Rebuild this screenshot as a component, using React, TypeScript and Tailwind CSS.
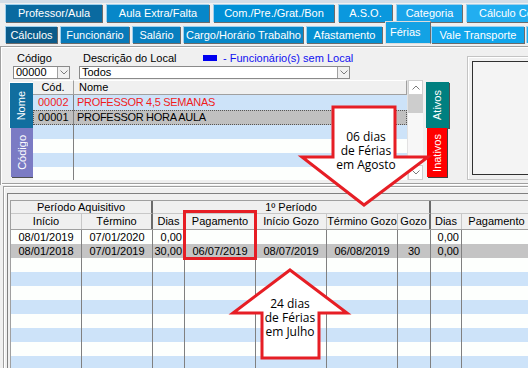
import React from "react";

const row1 = [
  { label: "Professor/Aula", cls: "w-[97px] bg-[#0a6aa0] justify-center" },
  { label: "Aula Extra/Falta", cls: "w-[103px] bg-[#0787c9] justify-center" },
  { label: "Com./Pre./Grat./Bon", cls: "w-[121px] bg-[#0090d6] justify-center" },
  { label: "A.S.O.", cls: "w-[54px] bg-[#0a98de] justify-center" },
  { label: "Categoria", cls: "w-[66px] bg-[#1aa4ea] justify-center" },
  { label: "Cálculo Comissão", cls: "w-[90px] bg-[#22aef0] justify-start pl-[12px]" },
];

const row2 = [
  { label: "Cálculos", cls: "w-[52px] mr-[3px] bg-[#0b5b8a]" },
  { label: "Funcionário", cls: "w-[69px] mr-[3px] bg-[#0879b8]" },
  { label: "Salário", cls: "w-[48px] mr-[3px] bg-[#087fbf]" },
  { label: "Cargo/Horário Trabalho", cls: "w-[120px] mr-[3px] bg-[#0888c8]" },
  { label: "Afastamento", cls: "w-[76px] mr-[3px] bg-[#0490d2]" },
];

const COLS = ["w-[71px]", "w-[71px]", "w-[32px]", "w-[71px]", "w-[71px]", "w-[71px]", "w-[33px]", "w-[31px]", "w-[70px]"];
const HEAD = ["Início", "Término", "Dias", "Pagamento", "Início Gozo", "Término Gozo", "Gozo", "Dias", "Pagamento"];
const ALIGN = [
  "justify-center",
  "justify-center",
  "justify-end pr-[2px]",
  "justify-center",
  "justify-center",
  "justify-center",
  "justify-center",
  "justify-end pr-[2px]",
  "justify-center",
];

const periods = [
  ["08/01/2019", "07/01/2020", "0,00", "", "", "", "", "0,00", ""],
  ["08/01/2018", "07/01/2019", "30,00", "06/07/2019", "08/07/2019", "06/08/2019", "30", "0,00", ""],
  ...Array.from({ length: 8 }, () => ["", "", "", "", "", "", "", "", ""]),
];

const people = [
  { cod: "00002", nome: "PROFESSOR 4,5 SEMANAS", red: true },
  { cod: "00001", nome: "PROFESSOR HORA AULA", red: false },
  { cod: "", nome: "", red: false },
  { cod: "", nome: "", red: false },
  { cod: "", nome: "", red: false },
  { cod: "", nome: "", red: false },
];

function Chevron({ up }: { up?: boolean }) {
  return (
    <svg width="8" height="5" viewBox="0 0 8 5">
      <polyline
        points={up ? "0.5,4.5 4,1 7.5,4.5" : "0.5,0.5 4,4 7.5,0.5"}
        fill="none"
        stroke="#7a7a7a"
        strokeWidth="1"
      />
    </svg>
  );
}

function Combo({ className, value }: { className: string; value: string }) {
  return (
    <div className={`h-[13px] flex bg-white border border-[#8a8a8a] ${className}`}>
      <span className="flex-1 pl-[2px] leading-[11px]">{value}</span>
      <span className="w-[12px] flex items-center justify-center bg-[#f0f0f0] border-l border-[#a0a0a0]">
        <Chevron />
      </span>
    </div>
  );
}

export default function App() {
  return (
    <div className="relative w-[528px] h-[368px] overflow-hidden bg-[#f0f0f0] font-['Liberation_Sans',Arial,sans-serif] text-[11px] leading-[13px] text-black">
      <div className="h-[3px] bg-[#d3dde7]" />

      {/* tab rows */}
      <div className="flex gap-[4px] pl-[5px] pt-[1px]">
        {row1.map((t) => (
          <div
            key={t.label}
            className={`h-[18px] shrink-0 flex items-center whitespace-nowrap text-white border-t border-l border-[#9fd0ee] shadow-[1px_1px_0_#6b6b6b] ${t.cls}`}
          >
            {t.label}
          </div>
        ))}
      </div>
      <div className="flex items-start pl-[5px] mt-[4px]">
        {row2.map((t) => (
          <div
            key={t.label}
            className={`h-[17px] shrink-0 flex items-center justify-center whitespace-nowrap text-white border-t border-l border-[#9fd0ee] shadow-[1px_1px_0_#6b6b6b] ${t.cls}`}
          >
            {t.label}
          </div>
        ))}
        <div className="relative z-10 -mt-[5px] h-[23px] w-[46px] shrink-0 flex items-start pl-[4px] pt-[4px] text-white bg-[#13a2e4] border border-[#dcdcdc] border-r-[#6b6b6b]">
          Férias
        </div>
        <div className="h-[17px] w-[93px] mr-[2px] shrink-0 flex items-center justify-center whitespace-nowrap text-white bg-[#10a6ec] border-t border-l border-[#9fd0ee] shadow-[1px_1px_0_#6b6b6b]">
          Vale Transporte
        </div>
        <div className="h-[17px] w-[20px] shrink-0 bg-[#20b0f0] border-t border-l border-[#9fd0ee]" />
      </div>

      {/* upper panel */}
      <div className="mt-[2px] h-[139px] flex shadow-[inset_1px_1px_0_#a0a0a0,inset_2px_2px_0_#ffffff,inset_0_-1px_0_#ffffff,inset_0_-2px_0_#a0a0a0]">
        <div className="w-[466px] shrink-0 flex flex-col">
          <div className="mt-[5px] h-[14px] flex items-center whitespace-nowrap">
            <span className="ml-[17px] w-[66px]">Código</span>
            <span className="w-[120px]">Descrição do Local</span>
            <span className="w-[14px] h-[6px] bg-[#0000f0]" />
            <span className="ml-[6px] text-[#1010f0]">- Funcionário(s) sem Local</span>
          </div>
          <div className="mt-[1px] flex">
            <Combo className="ml-[13px] w-[57px]" value="00000" />
            <Combo className="ml-[9px] w-[271px]" value="Todos" />
          </div>
          <div className="mt-[1px] h-[100px] flex">
            <div className="ml-[9px] w-[24px] pt-[2px] flex flex-col">
              <div className="h-[46px] w-[24px] flex items-center justify-center bg-[#116e9f] text-white border-t border-l border-white">
                <span className="[writing-mode:vertical-rl] rotate-180">Nome</span>
              </div>
              <div className="h-[49px] w-[22px] ml-[2px] flex items-center justify-center bg-[#7b7bc4] text-white shadow-[1px_1px_0_#505050]">
                <span className="[writing-mode:vertical-rl] rotate-180">Código</span>
              </div>
            </div>
            <div className="w-[374px] flex flex-col overflow-hidden bg-white">
              <div className="h-[15px] shrink-0 flex bg-[#f0f0f0]">
                <div className="w-[41px] flex items-center justify-center border-r border-b border-[#a0a0a0] border-t border-t-white">
                  Cód.
                </div>
                <div className="flex-1 flex items-center pl-[5px] border-r border-b border-[#a0a0a0] border-t border-t-white">
                  Nome
                </div>
              </div>
              {people.map((p, i) => (
                <div
                  key={i}
                  className={`${i < 2 ? "h-[15px]" : "h-[14px]"} shrink-0 flex whitespace-nowrap ${
                    i === 1
                      ? "bg-[#c0c0c0] outline-1 outline-dotted outline-[#555555] -outline-offset-1"
                      : i % 2 === 0
                        ? "bg-[#cde3f9]"
                        : "bg-[#fdfffd]"
                  } ${p.red ? "text-[#f01c1c]" : "text-black"}`}
                >
                  <div className="w-[41px] flex items-center pl-[5px] border-r border-[#808080]">{p.cod}</div>
                  <div className="flex-1 flex items-center pl-[3px] tracking-[-0.3px]">{p.nome}</div>
                </div>
              ))}
            </div>
            <div className="w-[16px] flex flex-col bg-[#f7f7f7] border-l border-[#e2e2e2]">
              <div className="h-[15px] flex items-center justify-center bg-white border border-[#cfcfcf]">
                <Chevron up />
              </div>
              <div className="h-[18px] bg-[#cdcdcd]" />
              <div className="flex-1" />
              <div className="h-[15px] flex items-center justify-center bg-white border border-[#cfcfcf]">
                <Chevron />
              </div>
            </div>
            <div className="ml-[3px] w-[23px] pt-[2px] flex flex-col">
              <div className="h-[46px] w-[23px] flex items-center justify-center bg-[#008080] text-white shadow-[1px_1px_0_#505050]">
                <span className="[writing-mode:vertical-rl] rotate-180">Ativos</span>
              </div>
              <div className="h-[49px] w-[20px] ml-[1px] flex items-center justify-center bg-[#ff0000] text-white shadow-[1px_1px_0_#404040]">
                <span className="[writing-mode:vertical-rl] rotate-180">Inativos</span>
              </div>
            </div>
          </div>
        </div>
        <div className="ml-[1px] mt-[10px] h-[124px] w-[80px] shrink-0 p-[4px] border border-[#c4c4c4] shadow-[inset_1px_1px_0_#ffffff]">
          <div className="h-full border border-[#303030] bg-[#f4f4f4]" />
        </div>
      </div>

      {/* lower panel */}
      <div className="mt-[1px] ml-[3px] h-[182px] pt-[7px] pl-[4px] shadow-[inset_1px_1px_0_#a0a0a0,inset_2px_2px_0_#ffffff]">
        <div className="h-full pt-[7px] pl-[3px] shadow-[inset_1px_1px_0_#808080]">
          <div className="border-l border-t border-[#a0a0a0] whitespace-nowrap">
            <div className="h-[13px] flex bg-[#f0f0f0]">
              <div className="w-[142px] shrink-0 flex items-center justify-center border-b border-[#c8c8c8] border-r-2 border-r-[#6b6b6b]">
                Período Aquisitivo
              </div>
              <div className="w-[278px] shrink-0 flex items-center justify-center border-b border-[#c8c8c8] border-r-2 border-r-[#6b6b6b]">
                1º Período
              </div>
              <div className="w-[101px] shrink-0 border-b border-[#c8c8c8]" />
            </div>
            <div className="h-[16px] flex bg-[#f0f0f0] border-b border-[#a0a0a0]">
              {HEAD.map((h, c) => (
                <div
                  key={c}
                  className={`${COLS[c]} shrink-0 flex items-center justify-center ${
                    c === 1 || c === 6 ? "border-r-2 border-[#6b6b6b]" : "border-r border-[#c8c8c8]"
                  }`}
                >
                  {h}
                </div>
              ))}
            </div>
            {periods.map((r, i) => (
              <div
                key={i}
                className={`h-[14px] flex ${
                  i === 1 ? "bg-[#c4c4c4]" : i % 2 === 1 ? "bg-[#cde3f9]" : "bg-[#fdfffd]"
                }`}
              >
                {r.map((v, c) => (
                  <div key={c} className={`${COLS[c]} shrink-0 flex items-center border-r border-[#808080] ${ALIGN[c]}`}>
                    {v}
                  </div>
                ))}
              </div>
            ))}
          </div>
        </div>
      </div>

      {/* annotations */}
      <svg className="absolute left-0 top-0 pointer-events-none" width="528" height="368" viewBox="0 0 528 368">
        <rect x="184.5" y="211.5" width="71" height="47" fill="none" stroke="#e61e25" strokeWidth="3" />
        <path
          d="M333 107 H395 V157 H428 L364 205 L302 157 H333 Z"
          fill="#ffffff"
          stroke="#e61e25"
          strokeWidth="3"
        />
        <path
          d="M290 270 L347 313 H319 V358 H262 V313 H233 Z"
          fill="#ffffff"
          stroke="#e61e25"
          strokeWidth="3"
        />
      </svg>
      <div className="absolute left-[316px] top-[130px] w-[100px] text-center font-['Open_Sans',sans-serif] text-[12px] leading-[14px]">
        06 dias
        <br />
        de Férias
        <br />
        em Agosto
      </div>
      <div className="absolute left-[240px] top-[297px] w-[100px] text-center font-['Open_Sans',sans-serif] text-[12px] leading-[14px]">
        24 dias
        <br />
        de Férias
        <br />
        em Julho
      </div>
    </div>
  );
}
